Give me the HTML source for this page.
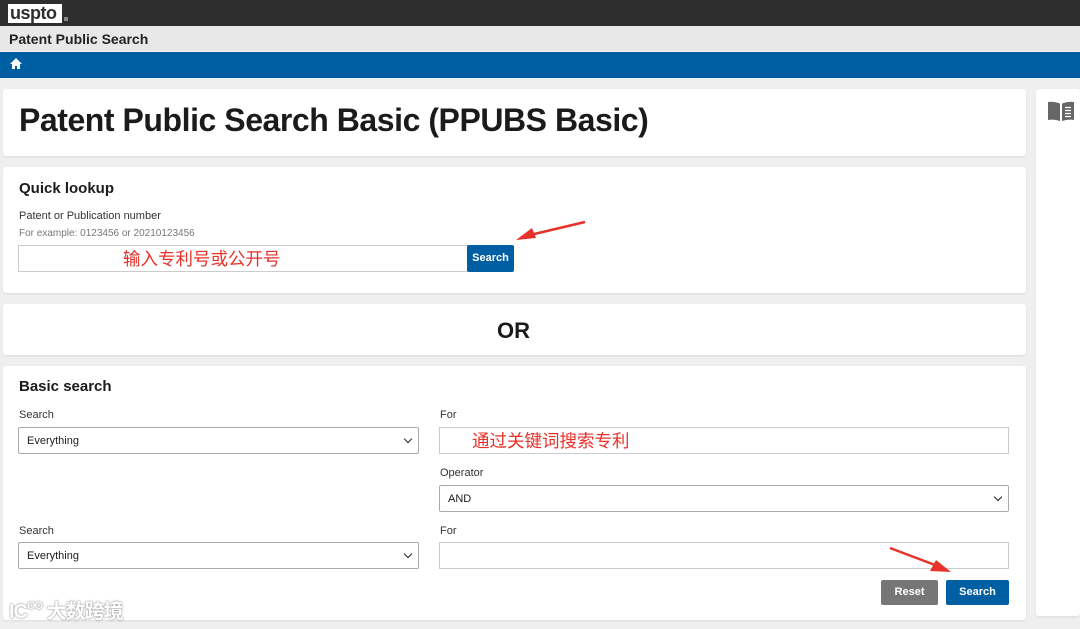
<!DOCTYPE html><html><head><meta charset="utf-8"><style>
*{box-sizing:border-box;margin:0;padding:0}
body{width:1080px;height:629px;overflow:hidden;background:#efefef;font-family:"Liberation Sans","Noto Sans CJK SC",sans-serif;color:#1b1b1b;position:relative}
.abs{position:absolute}
.card{position:absolute;background:#fff;border-radius:3px;box-shadow:0 1px 2px rgba(0,0,0,.08)}
.lbl{position:absolute;font-size:11px;color:#333}
.inp{position:absolute;border:1px solid #ccc;background:#fff;height:27px}
.sel{position:absolute;border:1px solid #aaa;background:#fff;height:27px;font-size:11px;padding:7px 8px;border-radius:2px}
.sel:after{content:"";position:absolute;right:7px;top:8px;width:5px;height:5px;border-right:1.5px solid #222;border-bottom:1.5px solid #222;transform:rotate(45deg)}
.btn{position:absolute;color:#fff;font-size:11px;font-weight:bold;text-align:center;border-radius:2px}
.red{color:#e8312a;font-size:17.5px;position:absolute;line-height:20px}
</style></head><body>
<div class="abs" style="left:0;top:0;width:1080px;height:26px;background:#2e2e2e"></div>
<div class="abs" style="left:8px;top:4px;width:54px;height:19px;background:#fff;color:#2e2e2e;font-size:18px;font-weight:bold;line-height:18px;padding-left:2px;letter-spacing:-.5px">uspto</div>
<div class="abs" style="left:64px;top:17px;width:4px;height:4px;background:#888"></div>
<div class="abs" style="left:0;top:26px;width:1080px;height:25px;background:#e8e8e8;font-size:14px;font-weight:bold;padding:5px 9px;color:#222">Patent Public Search</div>
<div class="abs" style="left:0;top:52px;width:1080px;height:26px;background:#005ea2"></div>
<svg class="abs" style="left:10px;top:58px" width="12" height="11" viewBox="0 0 12 11"><path d="M6 0L0 6h2v5h3V8h2v3h3V6h2z" fill="#fff"/></svg>
<div class="card" style="left:3px;top:89px;width:1023px;height:67px"><div class="abs" style="left:16px;top:13px;font-size:32px;font-weight:bold;letter-spacing:-.45px">Patent Public Search Basic (PPUBS Basic)</div></div>
<div class="card" style="left:1036px;top:89px;width:44px;height:527px"></div>
<svg class="abs" style="left:1047px;top:100px" width="28" height="22" viewBox="0 0 28 22"><path d="M1 2Q7 1 13 3.5V21Q7 19 1 20z" fill="#666"/><path d="M27 2Q21 1 15 3.5V21Q21 19 27 20z" fill="#666"/><path d="M18 7.5h6M18 10.5h6M18 13.5h6M18 16.5h6" stroke="#fff" stroke-width="1.3"/></svg>
<div class="card" style="left:3px;top:167px;width:1023px;height:126px">
<div class="abs" style="left:16px;top:13px;font-size:15px;font-weight:bold">Quick lookup</div></div>
<div class="lbl" style="left:19px;top:210px">Patent or Publication number</div>
<div class="lbl" style="left:19px;top:228px;font-size:10px;color:#777">For example: 0123456 or 20210123456</div>
<div class="inp" style="left:18px;top:245px;width:450px"></div>
<div class="red" style="left:123px;top:249px">输入专利号或公开号</div>
<div class="btn" style="left:467px;top:245px;width:47px;height:27px;background:#005ea2;line-height:27px">Search</div>
<svg class="abs" style="left:510px;top:215px" width="85" height="35"><path d="M75 7L20 20" stroke="#e8312a" stroke-width="2.5"/><path d="M6 25L22 13L26 23Z" fill="#e8312a"/></svg>
<div class="card" style="left:3px;top:304px;width:1023px;height:51px"><div class="abs" style="left:494px;top:14px;font-size:22px;font-weight:bold">OR</div></div>
<div class="card" style="left:3px;top:366px;width:1023px;height:254px"><div class="abs" style="left:16px;top:12px;font-size:15px;font-weight:bold">Basic search</div></div>
<div class="lbl" style="left:19px;top:409px">Search</div>
<div class="sel" style="left:18px;top:427px;width:401px">Everything</div>
<div class="lbl" style="left:440px;top:409px">For</div>
<div class="inp" style="left:439px;top:427px;width:570px"></div>
<div class="red" style="left:472px;top:431px">通过关键词搜索专利</div>
<div class="lbl" style="left:440px;top:467px">Operator</div>
<div class="sel" style="left:439px;top:485px;width:570px">AND</div>
<div class="lbl" style="left:19px;top:525px">Search</div>
<div class="sel" style="left:18px;top:542px;width:401px">Everything</div>
<div class="lbl" style="left:440px;top:525px">For</div>
<div class="inp" style="left:439px;top:542px;width:570px"></div>
<div class="btn" style="left:881px;top:580px;width:57px;height:25px;background:#767676;line-height:25px">Reset</div>
<div class="btn" style="left:946px;top:580px;width:63px;height:25px;background:#005ea2;line-height:25px">Search</div>
<svg class="abs" style="left:885px;top:543px" width="70" height="35"><path d="M5 5L50 22" stroke="#e8312a" stroke-width="2.5"/><path d="M66 29L45 28L51 17Z" fill="#e8312a"/></svg>
<div class="abs" style="left:9px;top:595px;font-size:20px;color:#fff;font-weight:bold;text-shadow:0 0 1px #888,0 0 2px #999;letter-spacing:-1px">IC<span style="font-size:11px;vertical-align:9px">OO</span> 大数跨境</div>
</body></html>
